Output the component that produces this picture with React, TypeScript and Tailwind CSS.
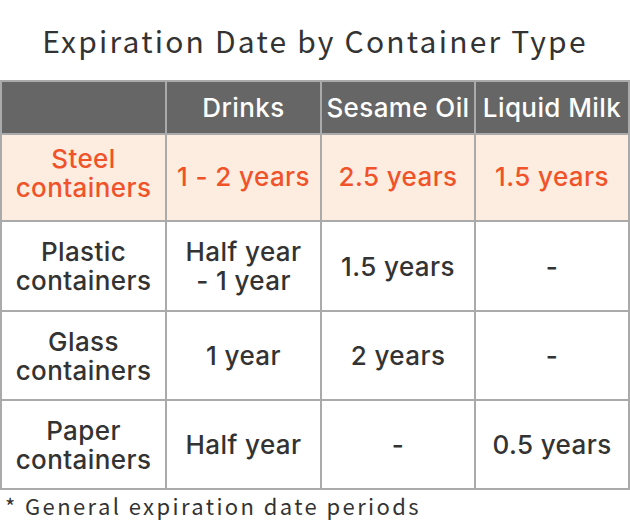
const rows = [
  { name: ['Steel', 'containers'], cells: [['1 - 2 years'], ['2.5 years'], ['1.5 years']], highlight: true, h: 'h-[87px]' },
  { name: ['Plastic', 'containers'], cells: [['Half year', '- 1 year'], ['1.5 years'], ['-']], highlight: false, h: 'h-[90px]' },
  { name: ['Glass', 'containers'], cells: [['1 year'], ['2 years'], ['-']], highlight: false, h: 'h-[89px]' },
  { name: ['Paper', 'containers'], cells: [['Half year'], ['-'], ['0.5 years']], highlight: false, h: 'h-[89px]' },
];

function Lines({ lines }: { lines: string[] }) {
  return (
    <>
      {lines.map((l) => (
        <div key={l}>{l}</div>
      ))}
    </>
  );
}

export default function App() {
  return (
    <div className="w-[630px] h-[520px] bg-white overflow-hidden">
      <h1 className="h-[80px] pt-[18px] text-center text-[30px] leading-[44px] tracking-[2.2px] text-[#333] font-['Noto_Sans_CJK_JP',sans-serif]">
        Expiration Date by Container Type
      </h1>
      <table className="w-[628px] border-collapse table-fixed font-['Inter',sans-serif] font-medium text-[26px] leading-[29px] tracking-[0.4px]">
        <colgroup>
          <col className="w-[165px]" />
          <col className="w-[155px]" />
          <col className="w-[154px]" />
          <col className="w-[154px]" />
        </colgroup>
        <thead>
          <tr className="h-[53px] bg-[#666] text-white">
            <th className="border-2 border-[#aaa] font-medium"></th>
            <th className="border-2 border-[#aaa] font-medium">Drinks</th>
            <th className="border-2 border-[#aaa] font-medium whitespace-nowrap">Sesame Oil</th>
            <th className="border-2 border-[#aaa] font-medium whitespace-nowrap">Liquid Milk</th>
          </tr>
        </thead>
        <tbody>
          {rows.map((r) => (
            <tr
              key={r.name[0]}
              className={`${r.h} ${r.highlight ? 'bg-[#fdede1] text-[#f0532a]' : 'bg-white text-[#333]'}`}
            >
              <td className={`border-2 border-[#aaa] text-center ${r.highlight ? 'pb-[9px]' : ''}`}>
                <Lines lines={r.name} />
              </td>
              {r.cells.map((c, i) => (
                <td key={i} className={`border-2 border-[#aaa] text-center whitespace-nowrap ${r.highlight ? 'pb-[3px]' : ''}`}>
                  <Lines lines={c} />
                </td>
              ))}
            </tr>
          ))}
        </tbody>
      </table>
      <p className="pl-[5px] pt-[1px] text-[22px] leading-[28px] tracking-[2.4px] text-[#333] font-['Noto_Sans_CJK_JP',sans-serif]">
        * General expiration date periods
      </p>
    </div>
  );
}
